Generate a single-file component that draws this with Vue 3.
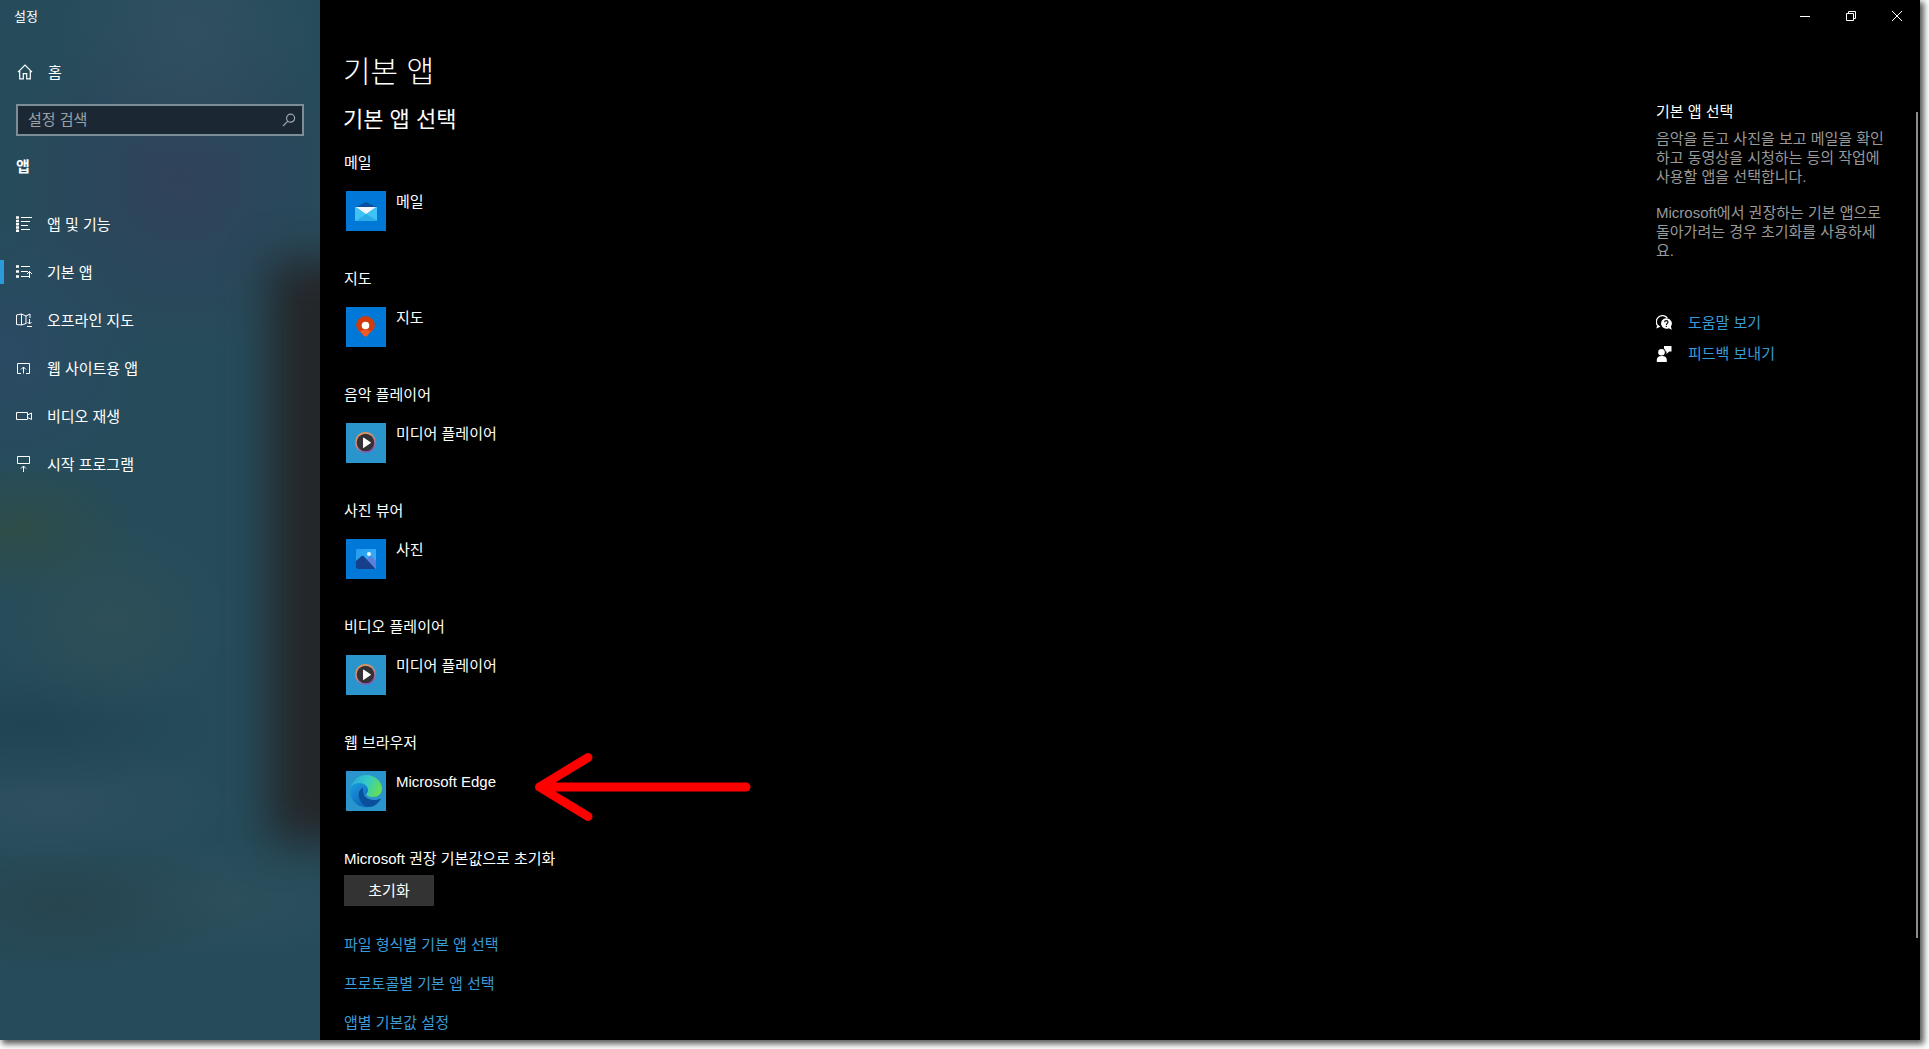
<template>
  <div class="desktop">
    <div class="window">
      <aside class="sidebar">
        <div class="window-title">설정</div>

        <a href="#home" class="home-link">
          <svg class="nav-icon" viewBox="0 0 16 16" fill="none" stroke="currentColor" stroke-width="1.2">
            <path d="M1 8.2 8 1.2l7 7M2.7 6.8v8h3.6V9.6h3.4v5.2h3.6v-8" />
          </svg>
          <span>홈</span>
        </a>

        <label class="search-box">
          <input v-model="keyword" type="text" class="search-input" placeholder="설정 검색" aria-label="설정 검색" />
          <svg class="search-icon" viewBox="0 0 14 14" fill="none" stroke="currentColor" stroke-width="1.2">
            <circle cx="8.6" cy="5.2" r="4" />
            <path d="M5.8 8.1 1 13" />
          </svg>
        </label>

        <h2 class="category">앱</h2>

        <!-- 왼쪽 메뉴 -->
        <nav class="nav-menu">
          <a
            v-for="item in navItems"
            :key="item.id"
            :href="'#' + item.id"
            class="nav-item"
            :class="{ active: currentPage === item.id }"
            @click.prevent="currentPage = item.id"
          >
            <svg class="nav-icon" viewBox="0 0 16 16" fill="none" stroke="currentColor">
              <path v-if="item.dots" :d="item.dots" stroke-width="2.4" />
              <path :d="item.path" />
            </svg>
            <span>{{ item.label }}</span>
          </a>
        </nav>
      </aside>

      <div class="main">
        <div class="titlebar">
          <button class="window-btn" aria-label="최소화">
            <svg viewBox="0 0 10 10"><path d="M0 5.5h10" /></svg>
          </button>
          <button class="window-btn" aria-label="이전 크기로 복원">
            <svg viewBox="0 0 10 10"><path d="M.5 2.5h7v7h-7zM2.5 2.5v-2h7v7h-2" /></svg>
          </button>
          <button class="window-btn" aria-label="닫기">
            <svg viewBox="0 0 10 10"><path d="m0 0 10 10M10 0 0 10" /></svg>
          </button>
        </div>

        <div class="page">
          <main class="content">
            <h1>기본 앱</h1>
            <h2 class="section-title">기본 앱 선택</h2>

            <section v-for="group in groups" :key="group.title" class="app-group">
              <h3>{{ group.title }}</h3>
              <button class="app-btn">
                <span class="app-tile" :class="group.icon">
                  <svg v-if="group.icon === 'mail'" viewBox="0 0 40 40">
                    <path d="M9 16.500 20 11l11 5.500v3H9z" fill="#0b4f9e" />
                    <path d="M9 16v13a1 1 0 0 0 1 1h20l1-1V16z" fill="#3fc3f4" />
                    <path d="m20 23 11 6.500-1 .5H10z" fill="#2aace8" />
                    <path d="m10 16 10 7 10-7z" fill="#f2f6fa" />
                  </svg>
                  <svg v-else-if="group.icon === 'maps'" viewBox="0 0 40 40">
                    <path d="M19.5 9a9.3 9.3 0 0 0-9.300 9.300c0 5 5.600 7.400 7.300 10.200 1 1.400 3 1.400 4 0 1.700-2.800 7.300-5.200 7.300-10.200A9.300 9.300 0 0 0 19.500 9z" fill="#d03c0c" />
                    <path d="M14 24.500c3-2.500 8-2.500 11 0-1.500 1.500-2.600 2.500-3.500 4-1 1.400-3 1.400-4 0-.9-1.500-2-2.500-3.500-4z" fill="#f05a28" />
                    <circle cx="19.5" cy="18.5" r="3.8" fill="#fff" />
                  </svg>
                  <svg v-else-if="group.icon === 'media'" viewBox="0 0 40 40">
                    <defs>
                      <linearGradient :id="group.id" x1="0.2" y1="0" x2="0.6" y2="1">
                        <stop offset="0" stop-color="#f59a4c" />
                        <stop offset="0.5" stop-color="#c98a86" />
                        <stop offset="1" stop-color="#7b52b8" />
                      </linearGradient>
                    </defs>
                    <circle cx="19.5" cy="19.5" r="10.5" :fill="`url(#${group.id})`" />
                    <circle cx="19.5" cy="19.5" r="8.8" fill="#333136" />
                    <path d="M17.500 15v9.500l7-4.800z" fill="#fff" stroke="#fff" stroke-linejoin="round" />
                  </svg>
                  <svg v-else-if="group.icon === 'photos'" viewBox="0 0 40 40">
                    <defs>
                      <linearGradient id="sky" x1="0" y1="0" x2="1" y2="1">
                        <stop offset="0" stop-color="#1f9cf0" />
                        <stop offset="1" stop-color="#48b4f6" />
                      </linearGradient>
                    </defs>
                    <rect x="10" y="10" width="20" height="20" rx="1" fill="url(#sky)" />
                    <path d="m18 23 5.500-5.500c.8-.8 1.700-.8 2.500 0l4 4V29l-1 1h-4z" fill="#5b7fdc" />
                    <path d="m10 22 5-4.600c1-.8 2-.8 3 0L29.500 30H11l-1-1z" fill="#16408c" />
                    <circle cx="23" cy="15" r="2" fill="#e8f8ff" />
                  </svg>
                  <svg v-else viewBox="0 0 40 40">
                    <defs>
                      <linearGradient id="edge-top" x1="0" y1="0.3" x2="1" y2="0.6">
                        <stop offset="0" stop-color="#28a9dc" />
                        <stop offset="0.5" stop-color="#34cbc4" />
                        <stop offset="1" stop-color="#68e04c" />
                      </linearGradient>
                      <linearGradient id="edge-body" x1="0" y1="0" x2="0.6" y2="1">
                        <stop offset="0" stop-color="#1c9de0" />
                        <stop offset="1" stop-color="#0c68bd" />
                      </linearGradient>
                    </defs>
                    <path d="M4.500 19C5.500 10 12 4 20 4c9.500 0 16 7 16 13.500 0 5-4 8.500-9 8.500-4 0-6.500-1.500-6.500-3 0-1 1.500-1.500 1.500-4 0-3-3.500-6-8-6-5 0-8.500 3-9.500 6z" fill="url(#edge-top)" />
                    <path d="M4 20c0-5 4.500-8 9.500-8 5.500 0 8.500 4 8.500 7 0 2.500-1.500 3-1.500 4l-6 2 7.500 11c-1 .2-1.500.2-2 .2C11 36.200 4 29 4 20z" fill="url(#edge-body)" />
                    <path d="M17 16.500c-3 1.500-5 5-4 9.500 1.300 6 6 10 10 10 5 0 9-3.500 11.500-7.500.4-.7-.1-1.200-.8-.8-2 1-3.700 1.300-5.700 1.300-6 0-11-4-11-9z" fill="#0b4f9c" />
                  </svg>
                </span>
                <span class="app-name">{{ group.app }}</span>
              </button>
              <svg v-if="group.icon === 'edge'" class="arrow" viewBox="0 0 218 68" fill="none">
                <path d="M54 4.500 5.500 34 54 63.500M5.500 34H212" stroke="#f00" stroke-width="9" stroke-linecap="round" stroke-linejoin="round" />
              </svg>
            </section>

            <section class="reset">
              <h3>Microsoft 권장 기본값으로 초기화</h3>
              <button class="reset-btn">초기화</button>
            </section>

            <div class="links">
              <a v-for="link in links" :key="link" href="#">{{ link }}</a>
            </div>
          </main>

          <aside class="help">
            <h3>기본 앱 선택</h3>
            <p>음악을 듣고 사진을 보고 메일을 확인하고 동영상을 시청하는 등의 작업에 사용할 앱을 선택합니다.</p>
            <p>Microsoft에서 권장하는 기본 앱으로 돌아가려는 경우 초기화를 사용하세요.</p>
            <div class="help-links">
              <a href="#help">
                <svg viewBox="0 0 16 16">
                  <path d="M1.600 10.600A5.500 5.500 0 1 1 11.300 3" fill="none" stroke="#fff" stroke-width="1.3" />
                  <path d="M.3 13.500 1.500 9.500 4.500 11.800z" fill="#fff" />
                  <path d="M10.200 3.200a5.300 5.300 0 1 0 2.600 10l3 1.600-.9-3.300a5.300 5.300 0 0 0-4.700-8.300z" fill="#fff" />
                  <path d="M8.600 7.200c0-2.200 3.400-2.100 3.400-.1 0 1.400-1.700 1.300-1.700 2.800M10.300 10.800v1.200" fill="none" stroke="#000" stroke-width="1.1" />
                </svg>
                <span>도움말 보기</span>
              </a>
              <a href="#feedback">
                <svg viewBox="0 0 16 16" fill="#fff">
                  <circle cx="5.5" cy="6.3" r="3.3" />
                  <path d="M.8 16v-2.200C.8 11.500 2.600 10 5.300 10h1c2.700 0 4.500 1.500 4.500 3.800V16z" />
                  <path d="M8 0h7.500v5.500h-2.300L10.500 8V5.500H9.700A4.600 4.600 0 0 0 8 2.600z" />
                </svg>
                <span>피드백 보내기</span>
              </a>
            </div>
          </aside>

          <div class="scrollbar"><div class="thumb"></div></div>
        </div>
      </div>
    </div>
  </div>
</template>

<script setup>
import { ref } from 'vue'

const keyword = ref('')
const currentPage = ref('defaultapps')

const navItems = [
  {
    id: 'appsfeatures',
    label: '앱 및 기능',
    dots: 'M0 1.5h3M0 5h3M0 8.3h3M0 11.5h3M0 14.8h3',
    path: 'M5 1.5h11M5 5.5h9M5 9.5h7M5 13.5h9'
  },
  {
    id: 'defaultapps',
    label: '기본 앱',
    dots: 'M0 2.5h3M0 7.5h3M0 12.5h3',
    path: 'M5 2.5h9M5 7.5h7M5 12.5h9M13.5 14V7.5M11 10l2.5-2.5L16 10'
  },
  {
    id: 'maps',
    label: '오프라인 지도',
    path: 'M10 11.5l-4.500 1.500-5-.5V3l5-1 4.500 2 4-2v4M5.500 2v11M10 4v8M13.500 7v5M11.500 10l2 2 2-2M11 14.500h5'
  },
  {
    id: 'appsforwebsites',
    label: '웹 사이트용 앱',
    path: 'M5 13.500H1.500v-10h12v10H10M7.500 13.500V7M5 9.500 7.500 7 10 9.500'
  },
  {
    id: 'videoplayback',
    label: '비디오 재생',
    path: 'M.5 4.500h11v7H.5zM11.500 7l4-2v6.500l-4-2'
  },
  {
    id: 'startupapps',
    label: '시작 프로그램',
    path: 'M4 7.500H1.500v-7h12v7H11M4 7.500h7M7.500 16v-6M5 12.500 7.500 10l2.500 2.500'
  }
]

const groups = [
  { id: 'email', title: '메일', app: '메일', icon: 'mail' },
  { id: 'map', title: '지도', app: '지도', icon: 'maps' },
  { id: 'music', title: '음악 플레이어', app: '미디어 플레이어', icon: 'media' },
  { id: 'photo', title: '사진 뷰어', app: '사진', icon: 'photos' },
  { id: 'video', title: '비디오 플레이어', app: '미디어 플레이어', icon: 'media' },
  { id: 'browser', title: '웹 브라우저', app: 'Microsoft Edge', icon: 'edge' }
]

const links = ['파일 형식별 기본 앱 선택', '프로토콜별 기본 앱 선택', '앱별 기본값 설정']
</script>

<style>
body {
  margin: 0;
  background: #fff;
}
</style>

<style scoped>
.desktop {
  height: 100vh;
  padding: 0 9px 9px 0;
  box-sizing: border-box;
  overflow: hidden;
  font-family: 'Liberation Sans', 'Noto Sans CJK KR', sans-serif;
  font-size: 15px;
  line-height: 20px;
  color: #fff;
}

.window {
  display: flex;
  height: 100%;
  background: #000;
  box-shadow: 3px 3px 6px 1px rgba(0, 0, 0, 0.65);
}

h1,
h2,
h3,
p {
  margin: 0;
  font-weight: 400;
}

h3 {
  font-size: 15px;
}

a {
  color: #3a9bd6;
  text-decoration: none;
}

button {
  padding: 0;
  border: none;
  background: transparent;
  color: inherit;
  font: inherit;
}

.sidebar {
  position: relative;
  z-index: 0;
  overflow: hidden;
  flex: 0 0 320px;
  background:
    radial-gradient(circle at 190px 30px, #31505f, transparent 130px),
    radial-gradient(circle at 180px 180px, #30425a, transparent 180px),
    radial-gradient(circle at 10px 350px, #2b4a64, transparent 130px),
    radial-gradient(ellipse 120px 70px at 20px 530px, #2f4d48, transparent),
    radial-gradient(ellipse 120px 100px at 110px 620px, #2e4f57, transparent),
    radial-gradient(ellipse 200px 70px at 30px 725px, #214454, transparent),
    radial-gradient(ellipse 180px 70px at 50px 805px, #2e4f60, transparent),
    radial-gradient(ellipse 180px 80px at 60px 905px, #27454f, transparent),
    radial-gradient(ellipse 160px 60px at 220px 900px, #2d4f5c, transparent),
    #264c5b;
}

.sidebar::after {
  content: '';
  position: absolute;
  z-index: -1;
  top: 25%;
  bottom: 19%;
  left: 270px;
  right: -80px;
  background: #242629;
  filter: blur(22px);
}

.window-title {
  height: 32px;
  padding-left: 14px;
  font-size: 13px;
  line-height: 34px;
}

.home-link,
.nav-item {
  display: flex;
  align-items: center;
  gap: 15px;
  height: 48px;
  padding-left: 16px;
  color: #fff;
}

.home-link span,
.nav-item span {
  padding-top: 2px;
}

.home-link {
  margin-top: 16px;
  padding-left: 17px;
}

.nav-icon {
  width: 16px;
  height: 16px;
}

.search-box {
  display: flex;
  align-items: center;
  height: 32px;
  margin: 8px 16px 0;
  padding: 0 6px 0 10px;
  border: 2px solid #7b8d98;
  background: #1b2834;
  color: #9aa5ad;
  box-sizing: border-box;
}

.search-input {
  flex: 1;
  min-width: 0;
  padding: 0;
  border: none;
  outline: none;
  background: transparent;
  color: #fff;
  font: inherit;
}

.search-input::placeholder {
  color: #98a2aa;
  opacity: 1;
}

.search-icon {
  width: 14px;
  height: 14px;
}

.category {
  margin: 21px 0 0 16px;
  font-size: 15px;
  font-weight: 700;
}

.nav-menu {
  margin-top: 23px;
}

.nav-item.active {
  background: linear-gradient(#2a9bd8, #2a9bd8) left center / 4px 24px no-repeat;
}

.main {
  flex: 1;
  min-width: 0;
  display: flex;
  flex-direction: column;
}

.titlebar {
  display: flex;
  justify-content: flex-end;
  height: 32px;
}

.window-btn {
  display: flex;
  align-items: center;
  justify-content: center;
  width: 46px;
}

.window-btn svg {
  width: 10px;
  height: 10px;
  fill: none;
  stroke: #fff;
}

.page {
  flex: 1;
  min-height: 0;
  display: flex;
  overflow: hidden;
}

.content {
  flex: 1;
  padding: 20px 24px 0 23px;
}

h1 {
  font-size: 30px;
  font-weight: 300;
  line-height: 40px;
}

.section-title {
  margin: 14px 0 19px;
  font-size: 22px;
  line-height: 28px;
}

.app-group,
.reset,
.links {
  margin-left: 1px;
}

.app-group {
  position: relative;
  margin-bottom: 38px;
}

.app-btn {
  display: flex;
  align-items: flex-start;
  gap: 10px;
  margin: 18px 0 0 2px;
}

.app-tile {
  width: 40px;
  height: 40px;
  background: #0078d7;
}

.app-tile.media,
.app-tile.edge {
  background: #2a94cc;
}

.app-tile svg {
  display: block;
}

.app-name {
  padding-top: 1px;
}

/* 기본 브라우저를 가리키는 화살표 */
.arrow {
  position: absolute;
  top: 20px;
  left: 190px;
  width: 218px;
  height: 68px;
}

.reset-btn {
  display: block;
  width: 90px;
  height: 31px;
  margin-top: 6px;
  background: #333;
}

.links {
  display: flex;
  flex-direction: column;
  align-items: flex-start;
  gap: 19px;
  margin-top: 29px;
}

.help {
  flex: 0 0 232px;
  padding: 70px 28px 0 0;
}

.help p {
  margin-top: 7px;
  line-height: 19px;
  color: #999;
}

.help p + p {
  margin-top: 17px;
}

.help-links {
  display: flex;
  flex-direction: column;
  gap: 11px;
  margin-top: 53px;
}

.help-links a {
  display: flex;
  align-items: center;
  gap: 16px;
}

.help-links svg {
  width: 16px;
  height: 16px;
}

.scrollbar {
  width: 2px;
  padding: 80px 2px 0 0;
}

.thumb {
  height: 89%;
  background: #8c8c8c;
}
</style>
